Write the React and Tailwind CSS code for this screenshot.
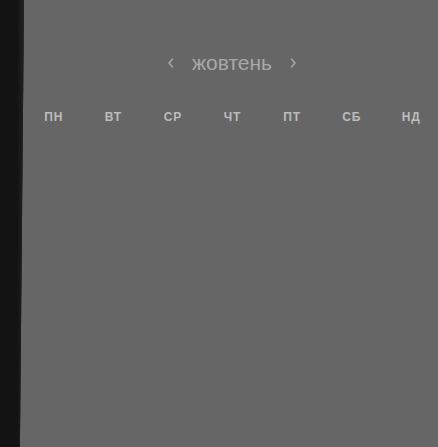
import React from "react";

const DAYS = ["пн", "вт", "ср", "чт", "пт", "сб", "нд"];

function Chevron({ dir }) {
  return (
    <svg width="10" height="12" viewBox="0 0 10 12" className="text-[#a6a6a6]">
      <path
        d={dir === "left" ? "M6.5 2 L3 6 L6.5 10" : "M3.5 2 L7 6 L3.5 10"}
        fill="none"
        stroke="currentColor"
        strokeWidth="1.6"
        strokeLinecap="round"
        strokeLinejoin="round"
      />
    </svg>
  );
}

export default function App() {
  return (
    <div className="flex h-[447px] w-[438px] overflow-hidden bg-[#666666] font-['Liberation_Sans',Arial,sans-serif]">
      <div className="w-[24px] shrink-0 bg-[#131313] [clip-path:polygon(0_0,100%_0,83%_100%,0_100%)]">
        <div className="ml-auto h-full w-[6px] bg-gradient-to-r from-[#151515] to-[#222222]" />
      </div>
      <div className="flex flex-1 flex-col">
        <div className="mt-[50px] flex h-[26px] items-center justify-center gap-[16px] pl-[2px]">
          <Chevron dir="left" />
          <span className="text-[21px] leading-none text-[#a8a8a8] -mt-[2px]">жовтень</span>
          <Chevron dir="right" />
        </div>
        <div className="mt-[35px] mr-[-3px] grid grid-cols-7">
          {DAYS.map((d) => (
            <div
              key={d}
              className="text-center text-[12px] font-bold uppercase leading-none text-[#bcbcbc] tracking-[0.8px]"
            >
              {d}
            </div>
          ))}
        </div>
      </div>
    </div>
  );
}
